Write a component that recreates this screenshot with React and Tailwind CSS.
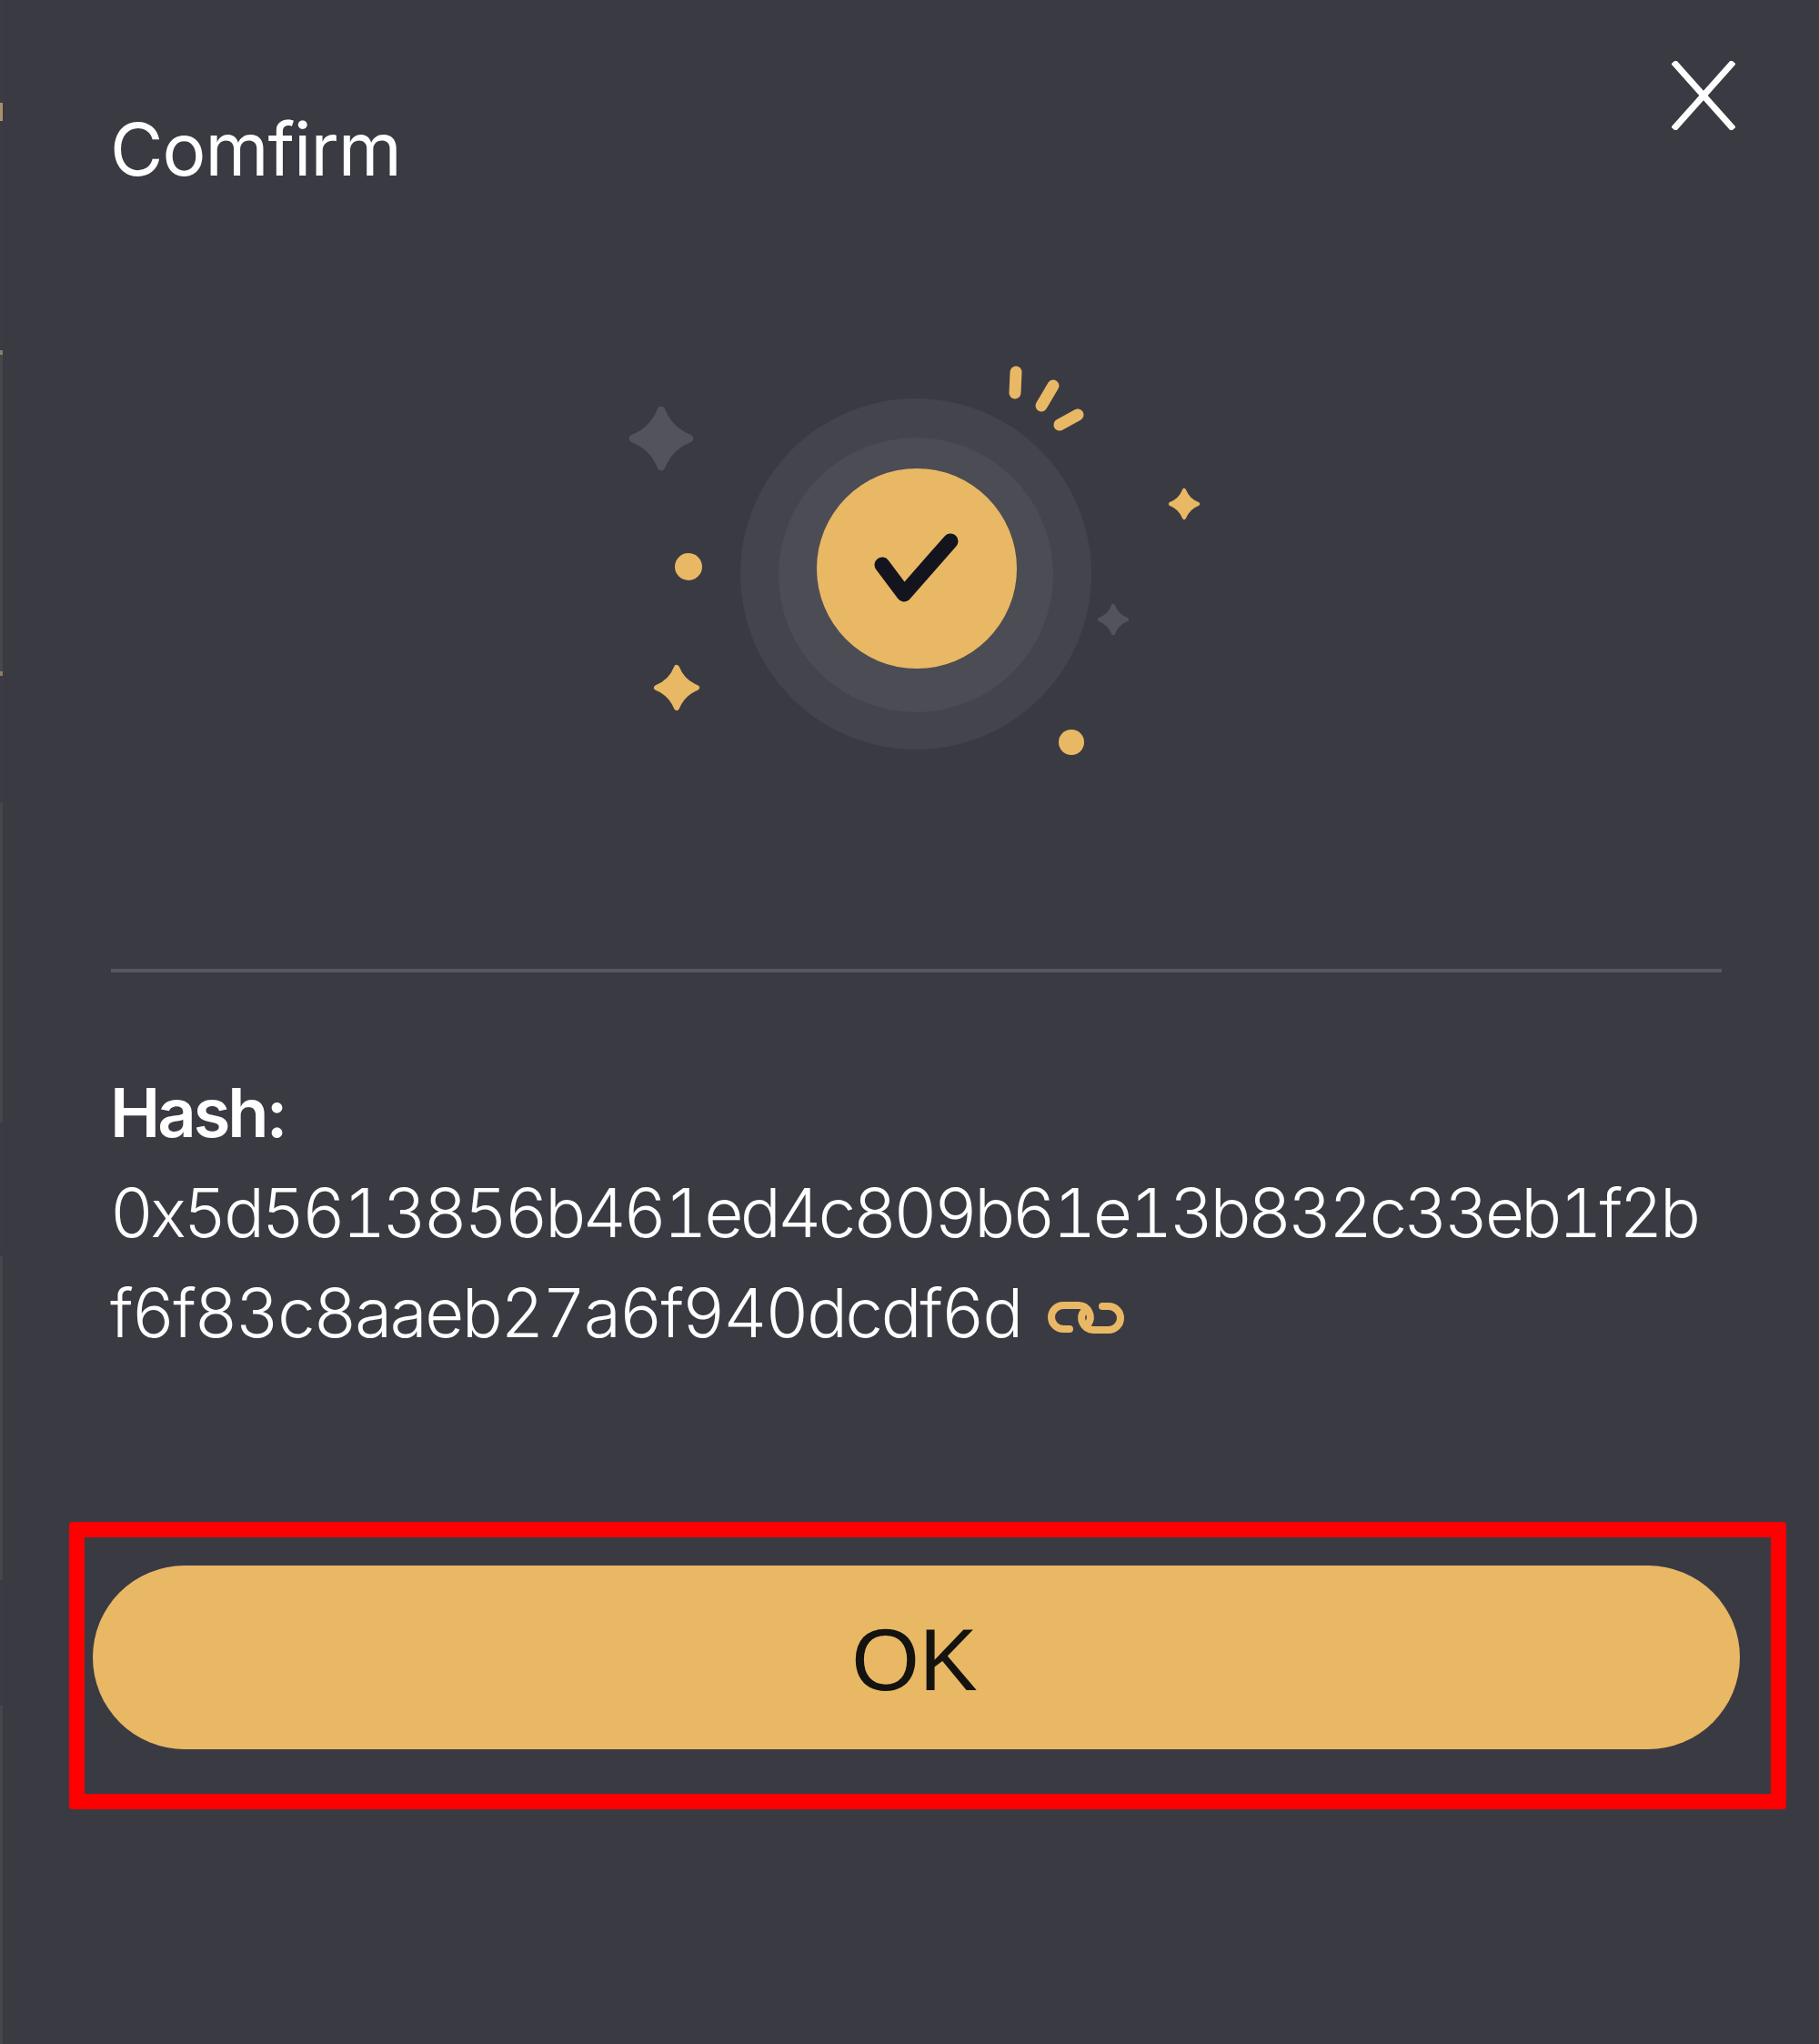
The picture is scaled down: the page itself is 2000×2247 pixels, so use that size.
import React from 'react';

const GOLD = '#e9b865';
const GREY = '#52535d';

const EDGE = [
  { h: 113, c: 'bg-[#3b3a45]' },
  { h: 20, c: 'bg-[#a8926f]' },
  { h: 252, c: 'bg-[#3b3a45]' },
  { h: 5, c: 'bg-[#8d7c66]' },
  { h: 348, c: 'bg-[#45474b]' },
  { h: 5, c: 'bg-[#8d7c66]' },
  { h: 140, c: 'bg-[#3b3a45]' },
  { h: 351, c: 'bg-[#45474b]' },
  { h: 147, c: 'bg-[#3b3a45]' },
  { h: 356, c: 'bg-[#45474b]' },
  { h: 138, c: 'bg-[#3b3a45]' },
  { h: 372, c: 'bg-[#45474b]' },
];

function Star({ x, y, r, fill }) {
  const k = r * 0.28;
  return (
    <path
      d={`M${x} ${y - r}Q${x + k} ${y - k} ${x + r} ${y}Q${x + k} ${y + k} ${x} ${y + r}Q${x - k} ${y + k} ${x - r} ${y}Q${x - k} ${y - k} ${x} ${y - r}Z`}
      fill={fill}
      stroke={fill}
      strokeWidth={r * 0.28}
      strokeLinejoin="round"
    />
  );
}

function SuccessArt() {
  return (
    <svg width="660" height="450" viewBox="677 390 660 450" className="block">
      <circle cx="1007" cy="631" r="193" fill="#44444c" />
      <circle cx="1007" cy="632" r="151" fill="#4c4c55" />
      <circle cx="1008" cy="625" r="110" fill={GOLD} />
      <polyline points="970,621 994,653 1045,595" fill="none" stroke="#14141f" strokeWidth="17" strokeLinecap="round" strokeLinejoin="round" />
      <g stroke={GOLD} strokeWidth="13" strokeLinecap="round">
        <line x1="1117" y1="409" x2="1116" y2="432" />
        <line x1="1158" y1="424" x2="1145" y2="446" />
        <line x1="1185" y1="456" x2="1165" y2="467" />
      </g>
      <Star x={727} y={482} r={31} fill={GREY} />
      <Star x={1302} y={554} r={15} fill={GOLD} />
      <Star x={744} y={756} r={22} fill={GOLD} />
      <Star x={1224} y={681} r={15} fill={GREY} />
      <circle cx="757" cy="623" r="15" fill={GOLD} />
      <circle cx="1178" cy="816" r="14" fill={GOLD} />
    </svg>
  );
}

export default function App() {
  return (
    <div className="flex h-[2247px] w-[2000px] overflow-hidden bg-[#3a3a43] text-white">
      {/* Left edge of the page behind the dialog */}
      <div className="flex w-[3px] flex-shrink-0 flex-col">
        {EDGE.map((s, i) => (
          <div key={i} className={s.c} style={{ height: s.h }} />
        ))}
      </div>

      <div className="flex w-[1997px] flex-col">
        {/* Header */}
        <div className="flex items-start justify-between pl-[118px] pr-[92px] pt-[67px]">
          <h1 className="mt-[49px] font-['Inter'] text-[80px] font-normal leading-[96px] tracking-[-1px]">Comfirm</h1>
          <svg width="70" height="76" viewBox="0 0 70 76" fill="none" stroke="#fff" strokeWidth="7" className="flex-shrink-0">
            <line x1="2" y1="1" x2="68" y2="75" />
            <line x1="68" y1="1" x2="2" y2="75" />
          </svg>
        </div>

        {/* Hero */}
        <div className="mt-[178px] flex w-[2008px] justify-center">
          <SuccessArt />
        </div>

        <div className="ml-[119px] mt-[225px] h-[4px] w-[1771px] bg-[#565761]" />

        {/* Hash */}
        <div className="ml-[118px] mt-[99px] w-[1780px] font-['Inter'] text-[74px] leading-[110px]">
          <div className="font-semibold tracking-[-3px]">Hash:</div>
          <div className="font-light tabular-nums tracking-[-3.3px]">0x5d5613856b461ed4c809b61e13b832c33eb1f2b</div>
          <div className="flex items-center font-light tabular-nums tracking-[-2.1px]">
            f6f83c8aaeb27a6f940dcdf6d
            <svg width="90" height="40" viewBox="1149 1433 90 40" fill="none" stroke={GOLD} strokeWidth="8" strokeLinecap="round" className="ml-[26px] mt-[10px]">
              <path d="M1176 1466H1169a13 13 0 0 1 0-26H1186a13 13 0 0 1 10 21" />
              <path d="M1212 1441H1219a13 13 0 0 1 0 26H1202a13 13 0 0 1-10-21" />
            </svg>
          </div>
        </div>

        {/* OK action, outlined in red */}
        <div className="ml-[73px] mt-[175px] h-[316px] w-[1888px] rounded-[4px] border-[17px] border-[#f00] px-[9px] pt-[31px]">
          <button className="flex h-[202px] w-[1811px] items-center justify-center rounded-full bg-[#e9b865] pr-[4px] pt-[5px] font-['Liberation_Sans'] text-[96px] text-[#14130f]">
            OK
          </button>
        </div>
      </div>
    </div>
  );
}
